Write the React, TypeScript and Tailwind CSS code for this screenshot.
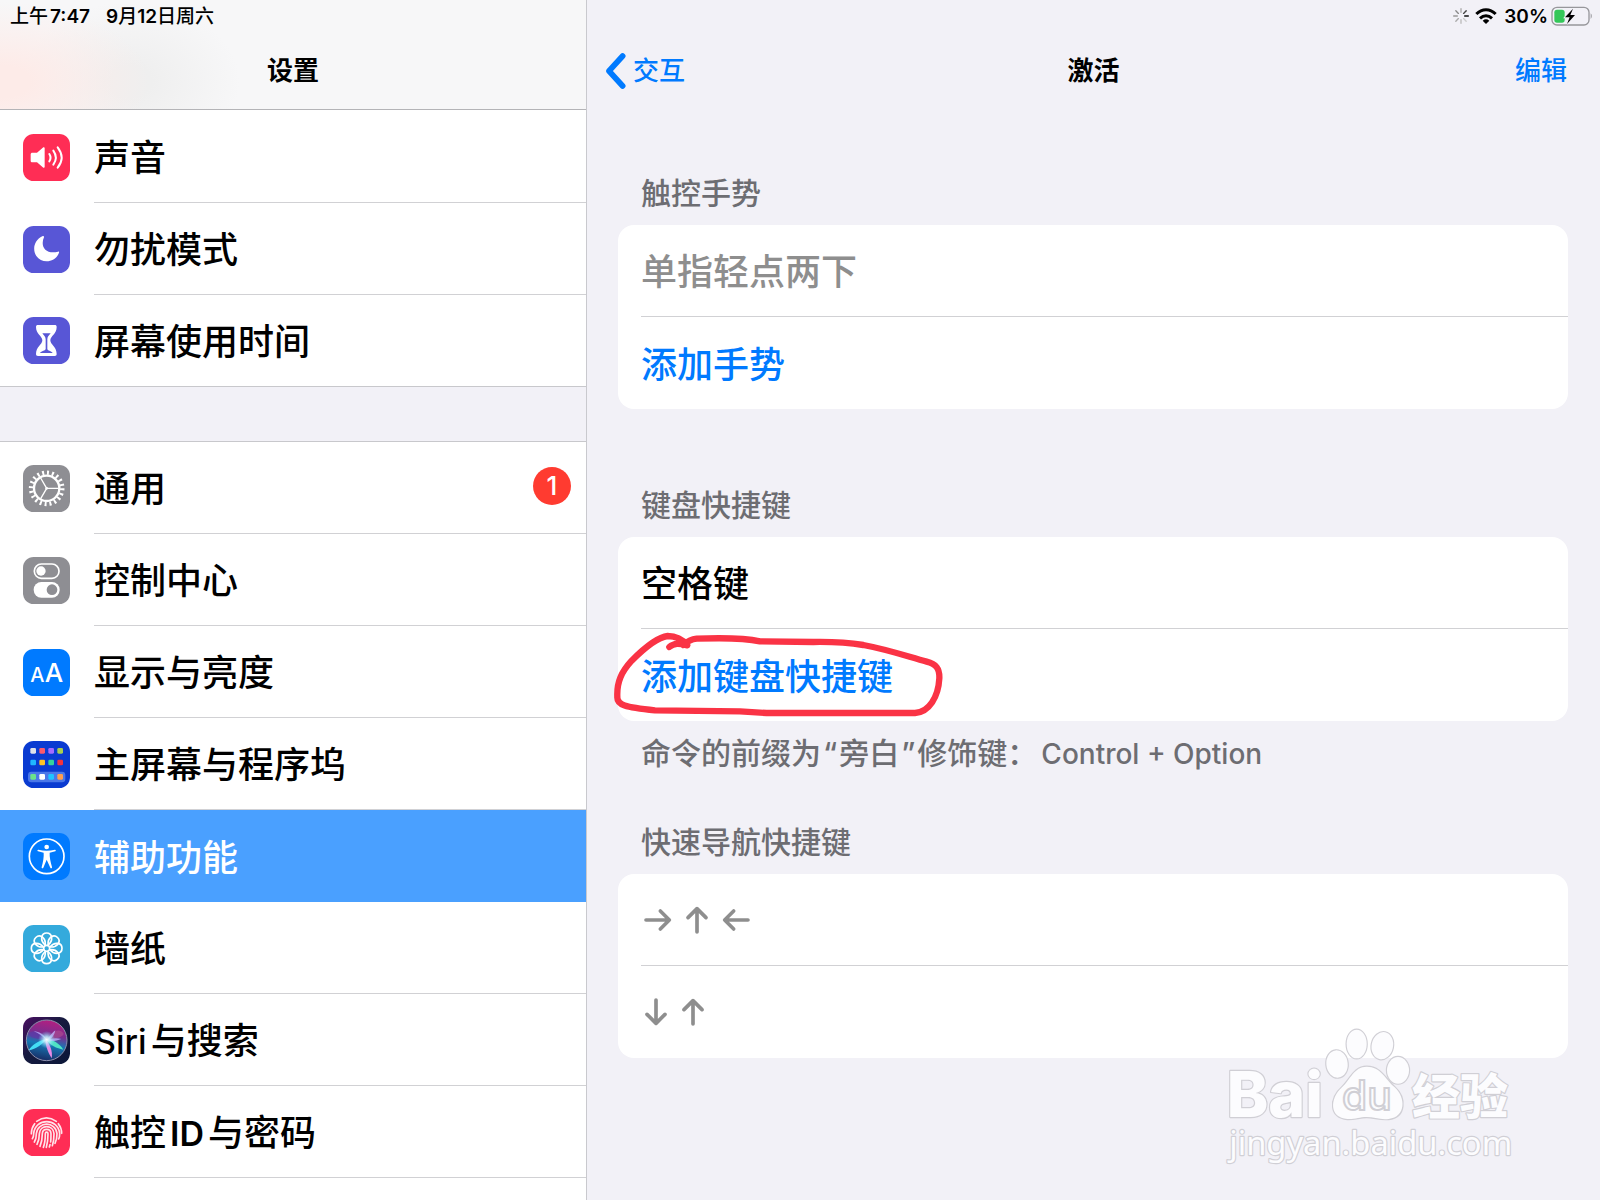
import React from 'react';

const FONT = "font-['Inter','Noto_Sans_CJK_SC',sans-serif]";

const Tile: React.FC<{ fill: string; children: React.ReactNode }> = ({ fill, children }) => (
  <svg viewBox="0 0 141 141" className="size-[47px] shrink-0" fill="none" aria-hidden="true">
    <rect width="141" height="141" rx="32" fill={fill} />
    {children}
  </svg>
);

const SoundIcon = () => (
  <Tile fill="#ff2d55">
    <path d="M28 56h14l19-16c2-1 4 0 4 2v57c0 2-2 3-4 2L42 85H28c-3 0-5-2-5-5V61c0-3 2-5 5-5Z" fill="#fff" />
    <g stroke="#fff" strokeWidth="6" strokeLinecap="round">
      <path d="M79 60q7 11 0 22" />
      <path d="M91 50q15 21 0 42" />
      <path d="M104 40q24 31 0 61" />
    </g>
  </Tile>
);

const MoonIcon = () => (
  <Tile fill="#5856d6">
    <path d="M58 31C34 42 27 70 40 90c16 24 57 21 68-10 1-3 0-4-3-3-38 9-54-17-42-43 1-3-2-5-5-3Z" fill="#fff" />
  </Tile>
);

const HourglassIcon = () => (
  <Tile fill="#5856d6">
    <path d="M45 24h50c4 0 6 2 6 6 0 21-19 27-19 40s19 19 19 41c0 4-2 6-6 6H45c-4 0-6-2-6-6 0-22 19-28 19-41S39 51 39 30c0-4 2-6 6-6Z" fill="#fff" />
    <path d="M58 49h25c-5 6-10 10-10 18v29c0 5 12 6 16 12H51c4-6 17-7 17-12V67c0-8-6-12-10-18Z" fill="#5856d6" />
  </Tile>
);

const GearIcon = () => (
  <Tile fill="#8e8e93">
    <g stroke="#fff">
      <circle cx="71" cy="70" r="38" strokeWidth="7" />
      <circle cx="71" cy="70" r="47" strokeWidth="13" pathLength="200" strokeDasharray="4 6" />
      <path d="M71 70h36M71 70 53 39M71 70l-18 31" strokeWidth="4" />
    </g>
    <circle cx="71" cy="70" r="4" fill="#fff" />
  </Tile>
);

const ControlIcon = () => (
  <Tile fill="#8e8e93">
    <rect x="34" y="21" width="74" height="43" rx="21" stroke="#fff" strokeWidth="5" />
    <circle cx="54" cy="42" r="14" fill="#fff" />
    <rect x="32" y="75" width="78" height="47" rx="23" fill="#fff" />
    <circle cx="87" cy="98" r="16" fill="#8e8e93" />
  </Tile>
);

const DisplayIcon = () => (
  <Tile fill="#007aff">
    <g fill="#fff" className="font-['Inter'] font-medium">
      <text x="22" y="100" fontSize="60">A</text>
      <text x="65" y="100" fontSize="78">A</text>
    </g>
  </Tile>
);

const APP_DOTS = [
  ['#dfe3ea', '#fb5a6c', '#a56bff', '#a8cf4f'],
  ['#1fb6ff', '#ffc324', '#35d39b', '#f5323c'],
  ['#6be38a', '#ffffff', '#1fc4ff', '#ff9e4f'],
];

const HomeIcon = () => (
  <Tile fill="#0a3bd1">
    <rect x="15" y="92" width="112" height="32" rx="10" fill="#4a77e8" />
    {APP_DOTS.map((row, r) =>
      row.map((c, i) => (
        <rect key={`${r}-${i}`} x={22 + i * 27} y={[21, 56, 99][r]} width="17" height="17" rx="4" fill={c} />
      ))
    )}
  </Tile>
);

const AccessibilityIcon = () => (
  <Tile fill="#007aff">
    <circle cx="71" cy="70" r="52" stroke="#fff" strokeWidth="5" />
    <circle cx="71" cy="42" r="7" fill="#fff" />
    <path d="M46 50c16 4 34 4 50 0 3 0 3 4 1 5l-17 4c-1 12 3 30 7 43 1 4-4 5-5 2L71 80l-10 24c-2 3-6 2-5-2 4-13 7-31 6-43l-17-4c-3-1-2-5 1-5Z" fill="#fff" />
  </Tile>
);

const WallpaperIcon = () => (
  <Tile fill="#34aadc">
    <g stroke="#fff" strokeWidth="5">
      {[0, 45, 90, 135, 180, 225, 270, 315].map((a) => (
        <path key={a} d="M67 60C50 46 54 24 71 24s21 22 4 36" transform={`rotate(${a} 71 70)`} />
      ))}
      <circle cx="71" cy="70" r="9" />
    </g>
  </Tile>
);

const SiriIcon = () => (
  <Tile fill="url(#siri-bg)">
    <defs>
      <linearGradient id="siri-bg" x1="0" y1="0" x2="1" y2="1">
        <stop offset="0" stopColor="#4b0f63" />
        <stop offset="0.45" stopColor="#161a3f" />
        <stop offset="1" stopColor="#0b1738" />
      </linearGradient>
      <linearGradient id="siri-orb" x1="0.6" y1="0" x2="0.4" y2="1">
        <stop offset="0" stopColor="#b51f80" />
        <stop offset="0.35" stopColor="#7b2d8f" />
        <stop offset="0.6" stopColor="#1678b4" />
        <stop offset="1" stopColor="#182a63" />
      </linearGradient>
      <radialGradient id="siri-glow">
        <stop offset="0" stopColor="#fff" />
        <stop offset="0.35" stopColor="#c9f5ff" stopOpacity="0.8" />
        <stop offset="1" stopColor="#6fd8ff" stopOpacity="0" />
      </radialGradient>
    </defs>
    <circle cx="71" cy="70" r="61" fill="url(#siri-orb)" stroke="#8d90ad" strokeWidth="3" />
    <path d="M71 70C84 44 108 30 122 50c-4 12-27 16-51 20Z" fill="#b0508f" opacity="0.6" />
    <path d="M71 70C52 42 28 34 18 52c6 14 30 12 53 18Z" fill="#5c3aa8" opacity="0.8" />
    <path d="M69 66c18 0 42 14 52 32-20-4-40-12-52-32Z" fill="#4fe3c4" />
    <path d="M71 66c-10 14-32 30-54 34 8-14 28-30 54-34Z" fill="#43dff5" />
    <path d="M68 68c12 12 22 34 18 56-8-14-20-36-18-56Z" fill="#e58be6" />
    <path d="M71 70C60 58 46 48 32 43c18 0 33 11 39 27ZM71 70c9-12 18-24 26-30-3 16-12 28-26 30ZM71 70c12-6 30-8 44-4-14 6-30 8-44 4Z" fill="#c3b6ff" opacity="0.75" />
    <circle cx="71" cy="68" r="26" fill="url(#siri-glow)" />
  </Tile>
);

const TouchIdIcon = () => (
  <Tile fill="#ff2d55">
    <g stroke="#ffe3e9" strokeWidth="5" strokeLinecap="round">
      <path d="M41 37q29-21 59 0" />
      <path d="M25 74c0-12 4-22 10-30M106 44c7 9 10 18 10 29" />
      <path d="M28 89c3-4 4-9 4-15 4-48 74-48 78 0 0 5 0 10-3 16" />
      <path d="M34 99c5-8 6-15 6-25 4-38 58-38 62 0 0 12-1 20-6 29" />
      <path d="M42 106c5-10 7-20 7-32 2-28 42-28 44 0 0 14-1 25-5 36" />
      <path d="M51 112c5-12 7-24 7-38 1-17 25-17 26 0 0 10 0 17-1 25M81 107l-2 7" />
      <path d="M61 115c5-13 6-26 6-41 0-6 8-6 8 0 0 16-1 28-5 41" />
    </g>
  </Tile>
);

interface MenuItem {
  label: React.ReactNode;
  icon: React.FC;
  badge?: number;
  active?: boolean;
}

const MENU_TOP: MenuItem[] = [
  { label: '声音', icon: SoundIcon },
  { label: '勿扰模式', icon: MoonIcon },
  { label: '屏幕使用时间', icon: HourglassIcon },
];

const MENU_MAIN: MenuItem[] = [
  { label: '通用', icon: GearIcon, badge: 1 },
  { label: '控制中心', icon: ControlIcon },
  { label: '显示与亮度', icon: DisplayIcon },
  { label: '主屏幕与程序坞', icon: HomeIcon },
  { label: '辅助功能', icon: AccessibilityIcon, active: true },
  { label: '墙纸', icon: WallpaperIcon },
  { label: <><span className="mr-1 text-[34px]">Siri</span>与搜索</>, icon: SiriIcon },
  { label: <>触控<span className="mx-1 text-[34px] font-semibold">ID</span>与密码</>, icon: TouchIdIcon },
];

const MenuRow: React.FC<{ item: MenuItem; last?: boolean }> = ({ item, last }) => {
  const Icon = item.icon;
  return (
    <li>
      <button
        className={`flex h-[92px] w-full items-center pl-[23px] text-left ${item.active ? 'bg-[#4aa0ff] text-white' : 'bg-white text-black'} ${last ? 'border-b border-[#c8c8cc]' : ''}`}
      >
        <Icon />
        <span className={`ml-6 flex h-full flex-1 items-center justify-between pr-[15px] ${last || item.active ? '' : 'border-b border-[#d1d1d4]'}`}>
          <span className="pt-[3px] text-[36px] leading-none font-medium whitespace-nowrap">{item.label}</span>
          {item.badge && (
            <span className="mb-1 flex size-[38px] items-center justify-center rounded-full bg-[#ff3b30] text-[26px] leading-none font-medium text-white">
              {item.badge}
            </span>
          )}
        </span>
      </button>
    </li>
  );
};

const Sidebar = () => (
  <aside className="flex flex-col border-r border-[#c9c9ce] bg-white">
    <header className="h-[110px] border-b border-[#b4b4b7] bg-[radial-gradient(ellipse_150px_80px_at_0_75%,#fdebe8_20%,transparent_100%),radial-gradient(ellipse_110px_80px_at_130px_75%,#efefef_20%,transparent_100%)] bg-[#f7f7f8]">
      <div className="flex h-8 items-center gap-4 pl-2.5 text-[19px] leading-none font-semibold">
        <span className="flex gap-0.5"><span className="font-medium">上午</span>7:47</span>
        <span>9<span className="font-medium">月</span>12<span className="font-medium">日周六</span></span>
      </div>
      <h1 className="flex h-[77px] items-center justify-center text-[26px] leading-none font-bold">设置</h1>
    </header>
    <ul className="pt-px">
      {MENU_TOP.map((item, i) => (
        <MenuRow key={i} item={item} last={i === MENU_TOP.length - 1} />
      ))}
    </ul>
    <div className="h-[55px] border-b border-[#c8c8cc] bg-[#f2f1f7]" />
    <ul>
      {MENU_MAIN.map((item, i) => (
        <MenuRow key={i} item={item} />
      ))}
    </ul>
  </aside>
);

const StatusIcons = () => (
  <div className="flex h-8 items-center justify-end pr-[7px] text-[19px] leading-none font-semibold">
    <svg viewBox="0 0 48 48" className="mr-1.5 size-4" strokeWidth="4" strokeLinecap="round" aria-hidden="true">
      {['#aaa', '#444', '#111', '#ccc', '#bbb', '#aaa', '#999', '#888'].map((c, i) => (
        <path key={i} d="M24 2v11" stroke={c} transform={`rotate(${i * 45} 24 24)`} />
      ))}
    </svg>
    <svg viewBox="0 0 66 48" className="mr-[7px] h-4 w-[22px]" fill="none" stroke="#000" strokeWidth="9" aria-hidden="true">
      <path d="M4 18c17-17 41-17 58 0" />
      <path d="M15 31c11-10 25-10 36 0" />
      <path d="M33 48 23 38q10-8 20 0Z" fill="#000" stroke="none" />
    </svg>
    <span className="mr-[3px]">30%</span>
    <svg viewBox="0 0 126 60" className="h-5 w-[42px]" aria-hidden="true">
      <rect x="3" y="4" width="111" height="53" rx="15" fill="none" stroke="#97979b" strokeWidth="4" />
      <rect x="10" y="11" width="31" height="39" rx="8" fill="#34c759" />
      <path d="M119 22q7 8 0 17Z" fill="#97979b" />
      <path d="M66 8 42 34h14l-8 20 24-27H58Z" fill="#000" stroke="#f2f1f7" strokeWidth="5" paintOrder="stroke" />
    </svg>
  </div>
);

const ARROWS = {
  right: 'M3 33h70M46 6l27 27-27 27',
  left: 'M75 33H5M32 6 5 33l27 27',
  up: 'M33 75V5M6 32 33 5l27 27',
  down: 'M33 3v70M6 46l27 27 27-27',
};

const Arrow: React.FC<{ dir: keyof typeof ARROWS }> = ({ dir }) => {
  const wide = dir === 'left' || dir === 'right';
  return (
    <svg
      viewBox={wide ? '0 0 78 66' : '0 0 66 78'}
      className={`overflow-visible ${wide ? 'h-[22px] w-[26px]' : 'h-[26px] w-[22px]'}`}
      fill="none"
      stroke="#8e8e8e"
      strokeWidth="11"
      strokeLinecap="round"
      strokeLinejoin="round"
      role="img"
      aria-label={dir}
    >
      <path d={ARROWS[dir]} />
    </svg>
  );
};

const Card: React.FC<{ children: React.ReactNode }> = ({ children }) => (
  <ul className="rounded-2xl bg-white pl-[23px]">{children}</ul>
);

const Row: React.FC<{ divider?: boolean; children: React.ReactNode }> = ({ divider, children }) => (
  <li className={`relative flex h-[92px] items-center text-[36px] leading-none font-medium ${divider ? 'border-b border-[#d1d1d4]' : ''}`}>
    {children}
  </li>
);

const SectionTitle: React.FC<{ children: React.ReactNode }> = ({ children }) => (
  <h3 className="mb-3 pl-[23px] text-[30px] leading-10 font-medium text-[#6d6d72]">{children}</h3>
);

const HandCircle = () => (
  <svg viewBox="36 387 996 276" className="pointer-events-none absolute top-0 -left-[29px] h-[92px] w-[332px]" fill="none" aria-hidden="true">
    <path
      d="M208 441C222 428 238 430 262 436 245 415 222 408 203 408 175 411 130 447 95 482 65 515 50 545 52 590 50 615 75 622 165 631L420 634 500 639H945C988 636 1015 590 1018 535 1019 505 1008 492 980 485 930 472 870 450 790 435 740 427 700 425 640 426L480 424C430 413 370 413 290 416 272 418 262 424 250 435"
      stroke="#fa3345"
      strokeWidth="19"
      strokeLinecap="round"
      strokeLinejoin="round"
    />
  </svg>
);

const Watermark = () => (
  <svg viewBox="0 0 1020 510" className="pointer-events-none absolute right-[60px] bottom-5 h-[170px] w-[340px]" aria-hidden="true">
    <g fill="#fcfcfe" stroke="#d0cfd5" strokeWidth="7" paintOrder="stroke" strokeLinejoin="round">
      <ellipse cx="470" cy="102" rx="30" ry="43" />
      <ellipse cx="547" cy="107" rx="32" ry="41" transform="rotate(12 547 107)" />
      <ellipse cx="411" cy="162" rx="32" ry="41" transform="rotate(-6 411 162)" />
      <ellipse cx="594" cy="181" rx="33" ry="40" />
      <path d="M500 170c-38 0-48 38-74 62-38 34-38 92 16 95 24 1 36-6 58-6s40 9 66 6c52-6 52-64 18-95-28-25-42-62-84-62Z" />
      <g className="font-['Inter','Noto_Sans_CJK_SC',sans-serif]">
        <text x="80" y="322" fontSize="188" fontWeight="800">Bai</text>
        <text x="636" y="312" fontSize="144" fontWeight="900">经验</text>
      </g>
      <text x="88" y="434" fontSize="98" className="font-['Noto_Sans']">jingyan.baidu.com</text>
    </g>
    <text x="426" y="301" fontSize="122" fill="#fcfcfe" stroke="#d0cfd5" strokeWidth="6" className="font-['Inter'] font-medium">du</text>
  </svg>
);

const Detail = () => (
  <main className="relative bg-[#f2f1f7]">
    <StatusIcons />
    <nav className="grid h-[78px] grid-cols-3 items-center px-[19px] text-[26px] leading-none font-medium">
      <button className="flex items-center gap-[7px] text-[#007aff]">
        <svg viewBox="0 0 60 108" className="h-9 w-5" fill="none" stroke="currentColor" strokeWidth="17" strokeLinecap="round" strokeLinejoin="round" aria-hidden="true">
          <path d="M50 9 9 54l41 45" />
        </svg>
        交互
      </button>
      <h2 className="text-center font-bold">激活</h2>
      <button className="justify-self-end pr-3.5 text-[#007aff]">编辑</button>
    </nav>

    <div className="px-8 pt-[63px] pl-[31px]">
      <section>
        <SectionTitle>触控手势</SectionTitle>
        <Card>
          <Row divider><span className="pt-[3px] text-[#8e8e8e]">单指轻点两下</span></Row>
          <Row><button className="pt-[3px] text-[#007aff]">添加手势</button></Row>
        </Card>
      </section>

      <section className="mt-[76px]">
        <SectionTitle>键盘快捷键</SectionTitle>
        <Card>
          <Row divider><button className="pt-[3px]">空格键</button></Row>
          <Row>
            <button className="pt-[3px] text-[#007aff]">添加键盘快捷键</button>
            <HandCircle />
          </Row>
        </Card>
        <p className="mt-3 pl-[23px] text-[30px] leading-10 font-medium text-[#6d6d72]">
          命令的前缀为<span className="mx-0.5">“</span>旁白<span className="mx-0.5">”</span>修饰键：<span className="ml-1 text-[28px]">Control + Option</span>
        </p>
      </section>

      <section className="mt-12">
        <SectionTitle>快速导航快捷键</SectionTitle>
        <Card>
          <Row divider>
            <span className="flex items-center gap-[15px] pl-1">
              <Arrow dir="right" /><Arrow dir="up" /><Arrow dir="left" />
            </span>
          </Row>
          <Row>
            <span className="flex items-center gap-[15px] pl-1">
              <Arrow dir="down" /><Arrow dir="up" />
            </span>
          </Row>
        </Card>
      </section>
    </div>
    <Watermark />
  </main>
);

export default function App() {
  return (
    <div className={`grid min-h-screen grid-cols-[587fr_1013fr] text-black ${FONT}`}>
      <Sidebar />
      <Detail />
    </div>
  );
}
